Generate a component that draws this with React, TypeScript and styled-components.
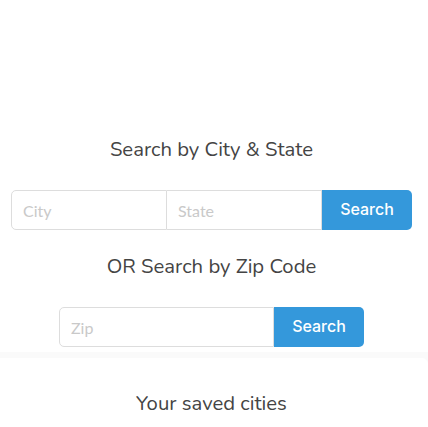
import styled, { createGlobalStyle } from 'styled-components';

const GlobalStyle = createGlobalStyle`
  html, body {
    margin: 0;
    padding: 0;
    background-color: #fafafa;
  }
  * {
    box-sizing: border-box;
  }
`;

const Page = styled.div`
  width: 428px;
  height: 427px;
  overflow: hidden;
  display: flex;
  flex-direction: column;
  gap: 6px;
  font-family: 'Nunito', Lato, 'Noto Sans', sans-serif;
`;

const SearchPanel = styled.section`
  background-color: #ffffff;
  padding: 137px 16px 5px 11px;
  display: flex;
  flex-direction: column;
  align-items: center;
`;

const Heading = styled.h2<{ $gap?: number }>`
  margin: 0 0 ${props => props.$gap ?? 29}px;
  font-size: 20.3px;
  font-weight: 400;
  line-height: 24px;
  color: #444444;
  text-align: center;
`;

const InputGroup = styled.form<{ $width: number }>`
  display: flex;
  width: ${props => props.$width}px;
  height: 40px;
  margin-bottom: 24px;

  &:last-child {
    margin-bottom: 0;
  }
`;

const Field = styled.input<{ $first?: boolean }>`
  flex: 1;
  min-width: 0;
  height: 100%;
  border: 1px solid #dddddd;
  border-left-width: ${props => (props.$first ? 1 : 0)}px;
  border-radius: ${props => (props.$first ? '5px 0 0 5px' : '0')};
  padding: 1px 11px 0;
  font-family: Lato, 'Noto Sans', sans-serif;
  font-size: 16px;
  color: #444444;
  background: #ffffff;
  outline: none;

  &::placeholder {
    color: #c9c9c9;
  }
`;

const SearchButton = styled.button`
  flex: 0 0 90px;
  height: 100%;
  border: none;
  border-radius: 0 5px 5px 0;
  background-color: #3498db;
  color: #ffffff;
  font-family: Inter, 'Open Sans', sans-serif;
  font-size: 16px;
  font-weight: 500;
  cursor: pointer;
  padding: 0 0 2px;
`;

const SavedCard = styled.section`
  flex: 1;
  background-color: #ffffff;
  border-top-right-radius: 6px;
  padding: 33px 16px 0 11px;
`;

export default function App() {
  return (
    <>
      <GlobalStyle />
      <Page>
        <SearchPanel>
          <Heading>Search by City &amp; State</Heading>
          <InputGroup $width={401} onSubmit={e => e.preventDefault()}>
            <Field $first placeholder="City" />
            <Field placeholder="State" />
            <SearchButton type="submit">Search</SearchButton>
          </InputGroup>
          <Heading $gap={29}>OR Search by Zip Code</Heading>
          <InputGroup $width={305} onSubmit={e => e.preventDefault()}>
            <Field $first placeholder="Zip" />
            <SearchButton type="submit">Search</SearchButton>
          </InputGroup>
        </SearchPanel>
        <SavedCard>
          <Heading $gap={0}>Your saved cities</Heading>
        </SavedCard>
      </Page>
    </>
  );
}
